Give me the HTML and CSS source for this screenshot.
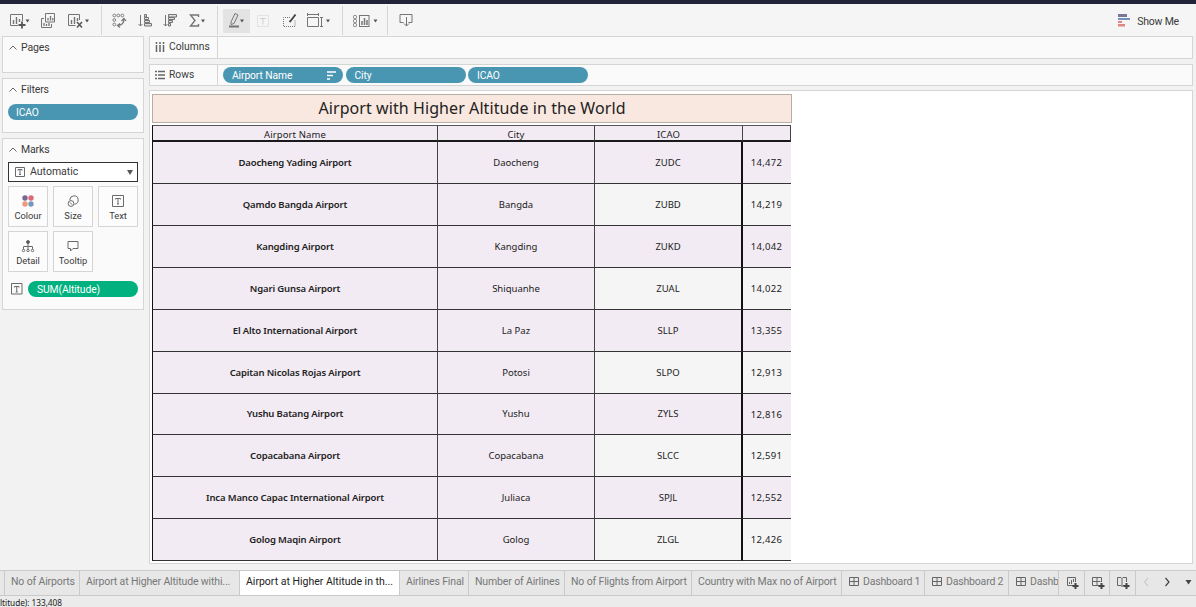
FILE: index.html
```html
<!DOCTYPE html>
<html lang="en">
<head>
<meta charset="utf-8">
<title>Airport with Higher Altitude in the World</title>
<link rel="stylesheet" href="styles.css">
</head>
<body>
<div class="app">
  <header class="titlebar"></header>
  <nav class="toolbar">
    <svg class="tools" width="430" height="32" viewBox="0 4 430 32" fill="none" stroke="#757575" stroke-width="1">
      <path class="sep" d="M101.5 6V35M217.500 6V35M342.500 6V35M387.500 6V35"/>
      <rect class="pressed" x="223" y="9" width="27" height="24"/>
      <path d="M18 25.500H10.500V14.500H22.500V21"/><path stroke-width="1.400" d="M13.500 20v4M16.500 17v7M19.500 19v3"/><path stroke="#555" stroke-width="1.800" d="M22 21.500v7M18.500 25h7"/>
      <path d="M45.500 13.500h9v8.500h-9zM44 18.500H41.500V27.500H51.500V24"/><path stroke-width="1.300" d="M44 23v3M46.500 24v2M49 23v3M48 18v2.500M50.500 16v4.500M52.800 18v2.500"/>
      <path d="M75.500 25.500H68.500V14.500H79.500V20"/><path stroke-width="1.400" d="M71.500 20v4M74.500 17v7M77.500 18v3"/><path stroke="#555" stroke-width="1.500" d="M77 22l5 5.500M82 22l-5 5.500"/>
      <g stroke-width=".9"><circle cx="114.300" cy="15.500" r="1.400"/><circle cx="118.300" cy="15.500" r="1.400"/><circle cx="122.300" cy="15.500" r="1.400"/><circle cx="114.300" cy="20" r="1.400"/><circle cx="114.300" cy="24.500" r="1.400"/><path stroke-width="1.200" d="M124 19q0 6-6 6.500M121.500 21l2.500-2.500 2 2.500M120 23.500l-2.500 2 2.500 2"/></g>
      <path fill="#ddd" d="M144.500 14.500h2v2.500h-2zM144.500 17.500h4v2h-4zM144.500 20.500h5v2h-5zM144.500 23.500h7v2.500h-7z"/><path d="M140.500 15v11M138.500 24l2 2 2-2"/>
      <path fill="#ddd" d="M168.500 14.500h8v2.500h-8zM168.500 17.500h6v2h-6zM168.500 20.500h4v2h-4zM168.500 23.500h2v2.500h-2z"/><path d="M165.500 15v11M163.500 24l2 2 2-2"/>
      <path stroke-width="1.400" d="M198.500 17v-2h-8l4.500 5.500-4.500 5.500h8v-2"/>
      <path d="M231 22l4-8.500 3 1.500-4 8.500-3 1z"/><path stroke-width="2" d="M229 26.500h10"/>
      <g stroke="#d0d0d0"><rect x="257.500" y="15.500" width="11" height="11" stroke-dasharray="1 1"/><path d="M260 18.500h6M263 18.500v6"/></g>
      <path stroke-dasharray="1 1" d="M290 17.500h-6.500v9h11.500v-7"/><path stroke="#444" stroke-width="1.900" d="M295.500 14.500l-4.500 6-1.500 1.500"/>
      <path d="M307.500 17.500h11v9h-11zM307.500 14.500h11M307.500 13v3M318.500 13v3M321.500 17v10M320 17.500h3M320 26.500h3"/>
      <g><rect x="359.500" y="15.500" width="9.500" height="11"/><path stroke-width="1.500" d="M362 21v4M364.500 18v7M367 20v5"/><rect x="353.500" y="15.500" width="3" height="3" rx="1"/><rect x="353.500" y="19.500" width="3" height="3" rx="1"/><rect x="353.500" y="23.500" width="3" height="3" rx="1"/></g>
      <path d="M403.500 22.500h-3.500v-8h12v8h-3.500M406.500 17v9M404 23.500l2.500 2.500 2.500-2.500"/>
      <path class="carets" d="M25.500 19.500h4l-2 3zM85 19.500h4l-2 3zM201 19.500h4l-2 3zM240 19.500h4l-2 3zM326 19.500h4l-2 3zM373.500 19.500h4l-2 3z"/>
    </svg>
    <div class="showme">
      <svg width="12" height="13" viewBox="0 0 12 13"><path fill="#7b7795" d="M0 0h9v3H0z"/><path fill="#7590bd" d="M0 4h12v2H0z"/><path fill="#e28684" d="M0 7h4v2H0zM0 10h7v2.500H0z"/></svg>
      <span>Show Me</span>
    </div>
  </nav>
  <div class="workspace">
    <aside class="side">
      <section class="card pages"><h2><svg width="8" height="5"><path d="M.5 4.500L4 1l3.500 3.500"/></svg>Pages</h2></section>
      <section class="card filters"><h2><svg width="8" height="5"><path d="M.5 4.500L4 1l3.500 3.500"/></svg>Filters</h2><div class="pill">ICAO</div></section>
      <section class="card marks"><h2><svg width="8" height="5"><path d="M.5 4.500L4 1l3.500 3.500"/></svg>Marks</h2>
        <div class="select"><svg class="ico" width="10" height="10"><path d="M.5.5h9v9h-9zM3 3.500v-1h4v1M5 2.500V7.500M4 7.500h2"/></svg><span>Automatic</span><svg width="7" height="5"><path class="dark" d="M0 0h6L3 5z"/></svg></div>
        <div class="buttons">
          <div class="btn"><svg width="14" height="14"><circle cx="4" cy="4" r="2.700" fill="#78678f"/><circle cx="10" cy="4" r="2.700" fill="#df6878"/><circle cx="4" cy="10" r="2.700" fill="#ed9a78"/><circle cx="10" cy="10" r="2.700" fill="#7399c0"/></svg><span>Colour</span></div>
          <div class="btn"><svg class="ico" width="14" height="14"><path d="M3.800 6A4.200 4.200 0 1 1 8.500 10.200"/><circle cx="5" cy="9.500" r="2.900"/><path d="M4 8.500l2 2"/></svg><span>Size</span></div>
          <div class="btn"><svg class="ico" width="14" height="14"><path d="M1.500 1.500h11v11h-11zM4.500 5.500v-1h5v1M7 4.500V10M6 10h2"/></svg><span>Text</span></div>
          <div class="btn"><svg class="ico" width="14" height="14"><circle cx="7" cy="3" r="1.500" fill="#555"/><path d="M7 4v6M2.500 10V7.500h9V10"/><circle cx="2.500" cy="11.500" r="1.200"/><circle cx="7" cy="11.500" r="1.200"/><circle cx="11.500" cy="11.500" r="1.200"/></svg><span>Detail</span></div>
          <div class="btn"><svg class="ico" width="14" height="14"><path d="M2 2.500h10v7H7l-2.500 2.500V9.500H2z"/></svg><span>Tooltip</span></div>
        </div>
        <div class="sum"><svg class="ico" width="12" height="12"><path d="M.5.500h10.500v10.500H.500zM3.500 4.500v-1h4.500v1M5.750 3.500V9M4.700 9h2"/></svg><div class="pill green">SUM(Altitude)</div></div>
      </section>
    </aside>
    <main class="main">
      <div class="shelf columns"><div class="label"><svg width="10" height="10"><path d="M1.500 0v2M5 0v2M8.500 0v2M1.500 3v7M5 3v7M8.500 3v7"/></svg>Columns</div></div>
      <div class="shelf rows"><div class="label"><svg width="10" height="10"><path d="M0 1.500h2M3 1.500h7M0 5h2M3 5h7M0 8.500h2M3 8.500h7"/></svg>Rows</div>
        <div class="pills"><div class="pill">Airport Name<svg width="9" height="9"><path d="M0 1h9M0 4.500h6M0 8h3"/></svg></div><div class="pill">City</div><div class="pill">ICAO</div></div></div>
      <div class="view">
        <h1>Airport with Higher Altitude in the World</h1>
        <table>
          <colgroup><col class="c1"><col class="c2"><col class="c3"><col class="c4"></colgroup>
          <thead><tr><th>Airport Name</th><th>City</th><th>ICAO</th><th></th></tr></thead>
          <tbody>
            <tr><td>Daocheng Yading Airport</td><td>Daocheng</td><td>ZUDC</td><td>14,472</td></tr>
            <tr><td>Qamdo Bangda Airport</td><td>Bangda</td><td>ZUBD</td><td>14,219</td></tr>
            <tr><td>Kangding Airport</td><td>Kangding</td><td>ZUKD</td><td>14,042</td></tr>
            <tr><td>Ngari Gunsa Airport</td><td>Shiquanhe</td><td>ZUAL</td><td>14,022</td></tr>
            <tr><td>El Alto International Airport</td><td>La Paz</td><td>SLLP</td><td>13,355</td></tr>
            <tr><td>Capitan Nicolas Rojas Airport</td><td>Potosi</td><td>SLPO</td><td>12,913</td></tr>
            <tr class="short"><td>Yushu Batang Airport</td><td>Yushu</td><td>ZYLS</td><td>12,816</td></tr>
            <tr><td>Copacabana Airport</td><td>Copacabana</td><td>SLCC</td><td>12,591</td></tr>
            <tr><td>Inca Manco Capac International Airport</td><td>Juliaca</td><td>SPJL</td><td>12,552</td></tr>
            <tr><td>Golog Maqin Airport</td><td>Golog</td><td>ZLGL</td><td>12,426</td></tr>
          </tbody>
        </table>
      </div>
    </main>
  </div>
  <footer class="tabs">
    <div class="t0"></div><div>No of Airports</div><div>Airport at Higher Altitude withi...</div><div class="active">Airport at Higher Altitude in th...</div><div>Airlines Final</div><div>Number of Airlines</div><div>No of Flights from Airport</div><div>Country with Max no of Airport</div>
    <div class="dash"><svg width="10" height="9"><path d="M.5.5h9v8h-9zM5 .5v8M.5 4.500h9"/></svg>Dashboard 1</div>
    <div class="dash"><svg width="10" height="9"><path d="M.5.5h9v8h-9zM5 .5v8M.5 4.500h9"/></svg>Dashboard 2</div>
    <div class="dash"><svg width="10" height="9"><path d="M.5.5h9v8h-9zM5 .5v8M.5 4.500h9"/></svg>Dashb</div>
    <div class="new"><svg width="13" height="13"><path d="M7 8.500H1.500v-8h8V5M3.500 5v2M5.500 3v4M7.500 2v3"/><path class="plus" d="M9.500 6v6M6.500 9h6"/></svg></div>
    <div class="new"><svg width="13" height="13"><path d="M7 8.500H.5v-8h9V5M5 .5v8M.5 4.500h8"/><path class="plus" d="M9.500 6v6M6.500 9h6"/></svg></div>
    <div class="new"><svg width="13" height="13"><path d="M7 8.500H6l-1 1-1-1H.5v-8H4l1 1 1-1h3.500V5M5 1.500v8"/><path class="plus" d="M9.500 6v6M6.500 9h6"/></svg></div>
    <div class="nav"><svg width="60" height="10"><path stroke="#bbb" d="M12 1L8.500 5l3.500 4"/><path stroke="#444" stroke-width="1.200" d="M29.500 1L33 5l-3.500 4"/><path class="dark" d="M49.500 3h6l-3 4.500z"/></svg></div>
  </footer>
  <div class="status">ltitude): 133,408</div>
</div>
</body>
</html>
```
FILE: styles.css
```css
* { box-sizing: border-box; }
body { margin: 0; font-family: Roboto, "Liberation Sans", sans-serif; font-size: 10.500px; color: #3a3a3a; }
svg { display: block; flex: none; }
.app { width: 1196px; height: 607px; overflow: hidden; background: #f2f2f2; display: flex; flex-direction: column; }
.titlebar { height: 4px; background: #22243a; flex: none; }
.toolbar { height: 32px; background: #f5f5f5; display: flex; justify-content: space-between; flex: none; }
.sep { stroke: #d5d5d5; }
.pressed { fill: #e3e3e3; stroke: none; }
.carets { fill: #555; stroke: none; }
.showme { display: flex; align-items: center; gap: 7px; padding: 3px 17px 0 0; letter-spacing: -.2px; }
.showme svg { margin-top: -3px; }
.workspace { display: flex; height: 534px; flex: none; padding: 0 3px 0 2px; gap: 5px; }
.side { width: 142px; display: flex; flex-direction: column; gap: 5px; }
.card { border: 1px solid #d5d5d5; background: #fafafa; padding: 0 5px; }
.pages { height: 37px; }
.filters { height: 55px; }
.marks { height: 172px; }
.card h2 { margin: 0; height: 21px; display: flex; align-items: center; gap: 4px; padding-left: 1px; font-size: 10.500px; letter-spacing: -.15px; font-weight: 400; }
.card h2 svg, .label svg { fill: none; stroke: #666; }
.pill { height: 16px; border-radius: 8px; background: #4996b2; color: #fff; padding: 0 8px; line-height: 17px; font-size: 10.300px; letter-spacing: -.1px; white-space: nowrap; }
.filters .pill { margin-top: 4px; }
.select { height: 20px; border: 1px solid #333; background: #fff; display: flex; align-items: center; padding: 0 3px 0 6px; margin-top: 2px; }
.select span { flex: 1; padding-left: 5px; margin-top: -2px; }
.ico { fill: none; stroke: #6a6a6a; }
.dark { fill: #555; stroke: none; }
.buttons { display: grid; grid-template-columns: repeat(3, 40px); grid-auto-rows: 41px; gap: 4px 5px; margin-top: 4px; }
.btn { border: 1px solid #d5d5d5; background: #fcfcfc; display: flex; flex-direction: column; align-items: center; padding-top: 7px; font-size: 9.300px; }
.btn span { line-height: 12px; margin-top: 2px; }
.sum { display: flex; align-items: center; gap: 5px; padding-left: 3px; margin-top: 9px; }
.green { background: #00b180; flex: 1; padding-left: 9px; }
.main { flex: 1; display: flex; flex-direction: column; }
.shelf { border: 1px solid #d5d5d5; background: #fafafa; display: flex; }
.columns { height: 23px; margin-bottom: 5px; }
.columns .label { padding-bottom: 2px; }
.rows { height: 22px; margin-bottom: 4px; }
.label { width: 68px; border-right: 1px solid #d5d5d5; display: flex; align-items: center; gap: 4px; padding-left: 5px; font-size: 10.300px; }
.rows .label { padding-bottom: 1px; }
.label svg { stroke-width: 1.500; }
.pills { display: flex; gap: 2.500px; padding: 2px 5px; }
.pills .pill { width: 120px; display: flex; justify-content: space-between; align-items: center; padding-right: 7px; padding-left: 9px; }
.pill svg { stroke: #fff; stroke-width: 1.500; }
.view { height: 474px; border: 1px solid #d5d5d5; background: #fff; padding: 3px 2px; font-family: "Noto Sans", "Open Sans", sans-serif; color: #222; }
.view h1 { width: 640px; height: 29px; margin: 0 0 2px; background: #f9e8e0; border: 1px solid #b7aea9; text-align: center; font-size: 16px; letter-spacing: .08px; font-weight: 400; line-height: 27px; white-space: nowrap; }
table { border-collapse: separate; border-spacing: 0; table-layout: fixed; width: 639px; font-size: 9.500px; text-align: center; }
.c1 { width: 286px; } .c2 { width: 157px; } .c3 { width: 148px; } .c4 { width: 48px; }
th, td { padding: 0; background: #f2ebf3; white-space: nowrap; line-height: 12px; border-right: 1px solid #444; border-bottom: 1px solid #333; }
th { height: 17px; font-weight: 400; border-top: 1px solid #555; border-bottom: 2px solid #1a1a1a; padding-top: 3px; line-height: 11px; letter-spacing: .1px; }
td { height: 42px; }
.short td { height: 41px; }
th:first-child, td:first-child { border-left: 1px solid #111; }
td:first-child { font-weight: 600; letter-spacing: -.14px; }
td:nth-child(3) { border-right: 2px solid #111; }
td:last-child { border-right: 0; padding-top: 1px; letter-spacing: .3px; }
td:last-child { padding-right: 1px; }
tbody tr:nth-child(even) td:nth-child(n+3) { background: #f5f5f5; }
.tabs { height: 26px; flex: none; display: grid; grid-template-columns: 5px 75px 160px 160px 69px 96px 127px 150px 83px 84px 50px 26px 25px 26px 1fr; border-top: 1px solid #c9cbca; border-bottom: 1px solid #c9cbca; background: #e7e7e7; color: #777; }
.tabs > div { border-right: 1px solid #cacaca; display: flex; align-items: center; padding: 0 0 4px 6px; white-space: nowrap; overflow: hidden; letter-spacing: -.14px; }
.tabs .t0 { padding: 0; }
.tabs .active { background: #fff; color: #222; letter-spacing: 0; }
.tabs svg { fill: none; stroke: #666; }
.tabs .dash { gap: 4px; padding-left: 7px; letter-spacing: -.18px; }
.tabs .new { padding: 0 0 0 7px; }
.tabs .plus { stroke: #444; stroke-width: 2; }
.tabs .nav { border: 0; padding: 0 0 2px; }
.tabs svg .dark { fill: #444; stroke: none; }
.status { height: 11px; background: #ebebeb; font: 8.300px/13px "Noto Sans", sans-serif; letter-spacing: -.05px; color: #222; }
```
